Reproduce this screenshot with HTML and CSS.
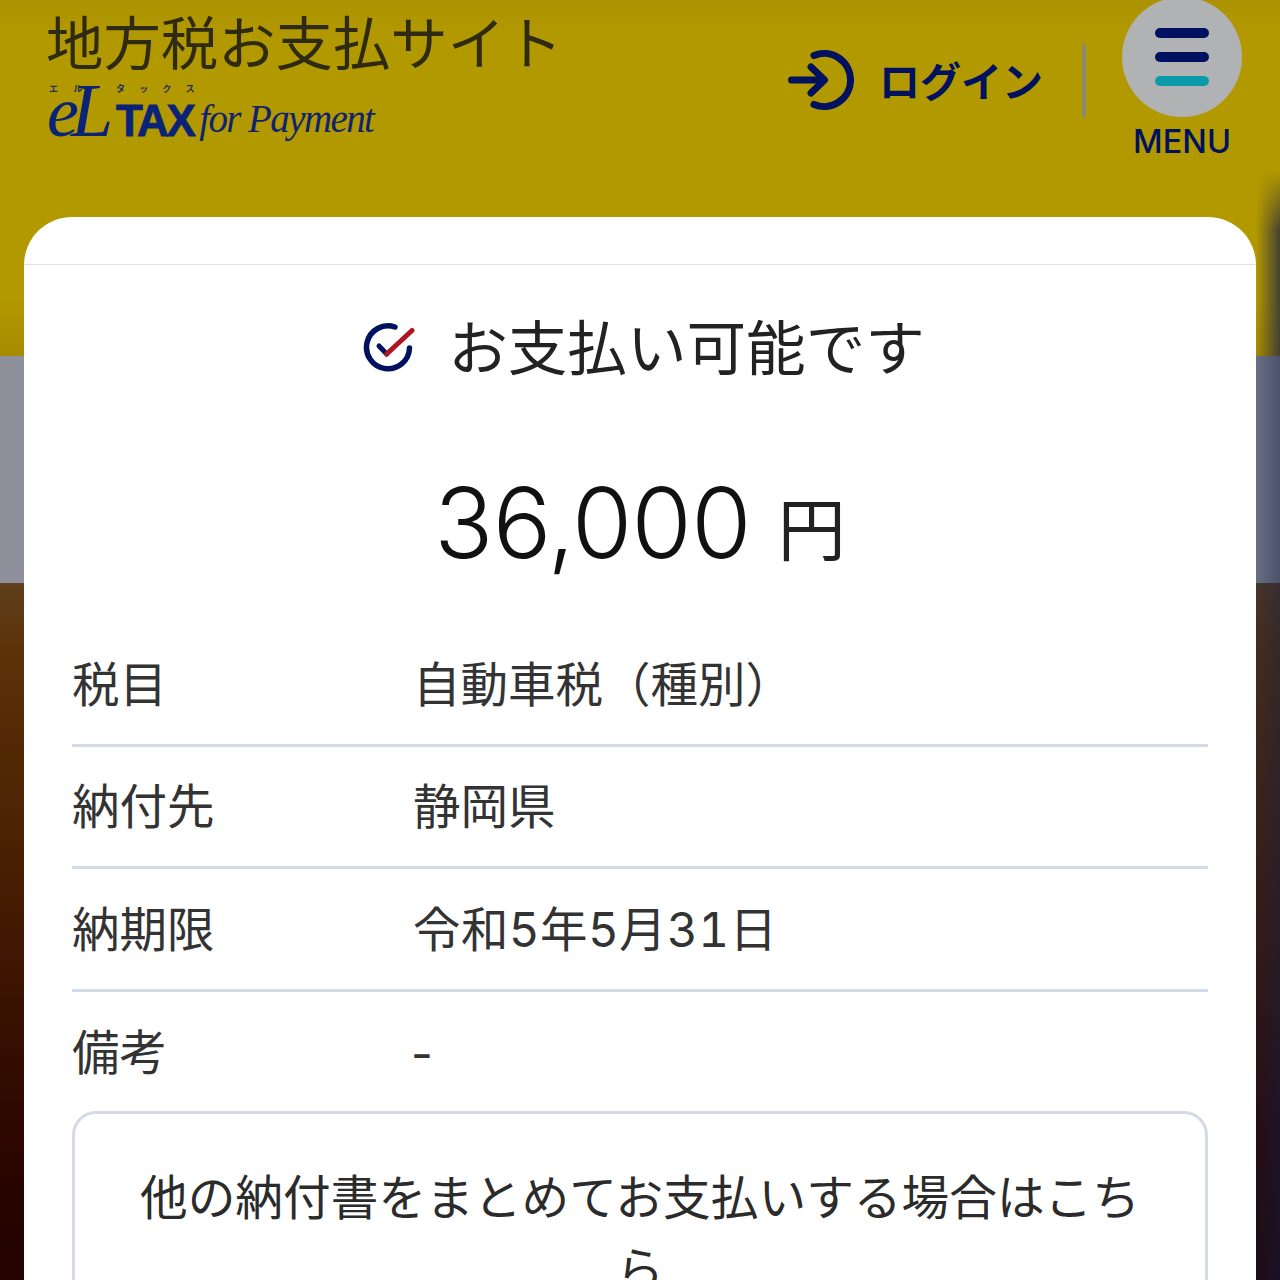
FILE: index.html
```html
<!DOCTYPE html>
<html lang="ja">
<head>
<meta charset="utf-8">
<title>地方税お支払サイト</title>
<link rel="stylesheet" href="styles.css">
</head>
<body>
<div class="page">
  <header class="header">
    <div class="brand">
      <div class="site-title">地方税お支払サイト</div>
      <div class="logo">
        <span class="logo-e">e</span><span class="logo-l">L</span><span class="logo-tax">TAX</span><span class="logo-for">for Payment</span>
        <span class="logo-kana logo-kana-el">エ ル</span>
        <span class="logo-kana logo-kana-tax">タ ッ ク ス</span>
      </div>
    </div>
    <div class="actions">
      <a class="login">
        <svg class="login-icon" viewBox="0 0 70 62" width="70" height="62">
          <path d="M27 6.500 A26.500 26.500 0 1 1 27 55.500" fill="none" stroke="#00115f" stroke-width="7" stroke-linecap="round"/>
          <path d="M4.500 31 H37 M24 18 L37.500 31 L24 44" fill="none" stroke="#00115f" stroke-width="7" stroke-linecap="round" stroke-linejoin="round"/>
        </svg>
        <span class="login-text">ログイン</span>
      </a>
      <span class="divider"></span>
      <div class="menu">
        <div class="menu-circle">
          <span class="bar"></span>
          <span class="bar"></span>
          <span class="bar bar-teal"></span>
        </div>
        <span class="menu-text">MENU</span>
      </div>
    </div>
  </header>
  <div class="edge-shade"></div>
  <div class="edge-blur"></div>
  <main class="card">
    <div class="card-top"></div>
    <div class="status">
      <svg class="status-icon" viewBox="0 0 52 52" width="52" height="52">
        <path d="M32 5 A21.500 21.500 0 1 0 46.500 26" fill="none" stroke="#00115f" stroke-width="5.500" stroke-linecap="round"/>
        <path d="M16 24 L23.700 32" fill="none" stroke="#00115f" stroke-width="5" stroke-linecap="round"/>
        <path d="M23.700 32 L49 8.500" fill="none" stroke="#b01522" stroke-width="5" stroke-linecap="round"/>
      </svg>
      <span class="status-text">お支払い可能です</span>
    </div>
    <div class="amount"><span class="amount-num">36,000</span><span class="amount-unit">円</span></div>
    <dl class="rows">
      <div class="row"><dt>税目</dt><dd>自動車税（種別）</dd></div>
      <div class="row"><dt>納付先</dt><dd>静岡県</dd></div>
      <div class="row"><dt>納期限</dt><dd class="date">令和5年5月31日</dd></div>
      <div class="row row-last"><dt>備考</dt><dd class="dash">-</dd></div>
    </dl>
    <a class="bulk">他の納付書をまとめてお支払いする場合はこちら</a>
  </main>
</div>
</body>
</html>
```
FILE: styles.css
```css
* { box-sizing: border-box; }
html, body { margin: 0; height: 1280px; overflow: hidden; }
body {
  font-family: Inter, "Noto Sans CJK JP", sans-serif;
  color: #333;
}
.page {
  position: relative;
  width: 1280px;
  height: 1280px;
  overflow: hidden;
  background: linear-gradient(to bottom,
    #b39900 0, #b39900 300px, #a68b00 356px,
    #8e919b 356px, #8e919b 583px,
    #5f3f1c 583px, #5c3208 650px, #451c02 900px, #2e0700 1120px, #230200 1280px);
}
.edge-shade {
  position: absolute;
  top: 356px; right: 0; bottom: 0;
  width: 24px;
  background: linear-gradient(to right, rgba(20,30,70,.3) 0, rgba(20,30,70,.55) 100%);
}
.edge-blur {
  position: absolute;
  top: 170px; right: 0;
  width: 24px; height: 186px;
  background: linear-gradient(to right, rgba(50,50,60,0) 0, rgba(50,50,60,.85) 100%);
  -webkit-mask-image: linear-gradient(to bottom, transparent 0, #000 60px);
  mask-image: linear-gradient(to bottom, transparent 0, #000 60px);
}
.header {
  height: 217px;
  display: flex;
  justify-content: space-between;
  padding: 0 38px 0 46px;
  background: linear-gradient(to bottom, #ac9200 0, #b39900 40px);
}
.brand { display: flex; flex-direction: column; }
.site-title {
  font-size: 57.400px;
  line-height: 88px;
  color: #2f2a12;
  white-space: nowrap;
}
.logo {
  position: relative;
  display: flex;
  align-items: baseline;
  height: 58px;
  margin-top: -7px;
  color: #0a2277;
  white-space: nowrap;
}
.logo-e, .logo-l {
  font-family: "Liberation Serif", serif;
  font-style: italic;
  line-height: 58px;
}
.logo-e { font-size: 72px; width: 24px; margin-left: 1px; }
.logo-l { font-size: 76px; width: 45px; }
.logo-tax {
  font-family: "Liberation Sans", sans-serif;
  font-weight: 700;
  font-size: 44px;
  line-height: 58px;
  letter-spacing: -2.500px;
  -webkit-text-stroke: .8px #0a2277;
}
.logo-for {
  font-family: "Liberation Serif", serif;
  font-style: italic;
  font-size: 39px;
  line-height: 58px;
  margin-left: 6px;
  letter-spacing: -1.600px;
  color: #10246e;
  transform: translateY(-4px);
}
.logo-kana {
  position: absolute;
  top: 3px;
  font-size: 9px;
  line-height: 10px;
  font-weight: 700;
  color: #22305a;
  white-space: pre;
}
.logo-kana-el { left: 3px; word-spacing: 13px; }
.logo-kana-tax { left: 70px; word-spacing: 12px; }
.actions { display: flex; align-items: flex-start; }
.login {
  display: flex;
  align-items: center;
  gap: 22px;
  margin-top: 49px;
  height: 62px;
  color: #00115f;
}
.login-icon { display: block; }
.login-text { font-size: 41px; font-weight: 700; line-height: 62px; margin-top: 4px; }
.divider {
  width: 4px;
  height: 72px;
  margin: 45px 36px 0 39px;
  background: #8a8a70;
}
.menu {
  display: flex;
  flex-direction: column;
  align-items: center;
  margin-top: -3px;
}
.menu-circle {
  width: 120px;
  height: 120px;
  border-radius: 50%;
  background: #b1b2b4;
  display: flex;
  flex-direction: column;
  align-items: center;
  justify-content: center;
  gap: 14px;
}
.bar { width: 54px; height: 10px; border-radius: 5px; background: #00115f; }
.bar-teal { background: #0b9aa8; }
.menu-text {
  font-size: 32.500px;
  font-weight: 550;
  line-height: 44px;
  margin-top: 3px;
  color: #00115f;
}
.card {
  position: relative;
  margin: 0 24px;
  height: 1100px;
  padding: 0 48px;
  background: #fff;
  border-radius: 48px 48px 0 0;
}
.card-top { height: 48px; margin: 0 -48px; border-bottom: 1px solid #e2e2de; }
.status {
  display: flex;
  align-items: center;
  justify-content: center;
  height: 166px;
  gap: 33px;
  padding-left: 8px;
}
.status-icon { display: block; }
.status-text { font-size: 59.600px; line-height: 166px; color: #222; }
.amount {
  display: flex;
  justify-content: center;
  align-items: baseline;
  gap: 27px;
  height: 193px;
  padding-top: 20px;
  color: #111;
}
.amount-num { font-size: 97.500px; line-height: 145px; font-weight: 340; letter-spacing: -.6px; }
.amount-unit { font-size: 68px; line-height: 145px; color: #222; transform: translateY(-3px); }
.rows { margin: 0; }
.row {
  display: grid;
  grid-template-columns: 341px 1fr;
  align-items: center;
  height: 122.500px;
  padding-bottom: 5px;
  border-bottom: 3px solid #d3dbe8;
  font-size: 47.500px;
}
.row-last { border-bottom: 0; height: 119px; padding-bottom: 3px; }
.row dt, .row dd { margin: 0; }
.date { font-feature-settings: "tnum"; letter-spacing: .4px; }
.dash { transform: translate(-2px, 4px); }
.bulk {
  display: block;
  border: 3px solid #d3dbe8;
  border-bottom: 0;
  border-radius: 24px 24px 0 0;
  height: 300px;
  padding: 48px 60px 0;
  text-align: center;
  font-size: 47.700px;
  line-height: 72px;
  color: #2b2b2b;
}
```
